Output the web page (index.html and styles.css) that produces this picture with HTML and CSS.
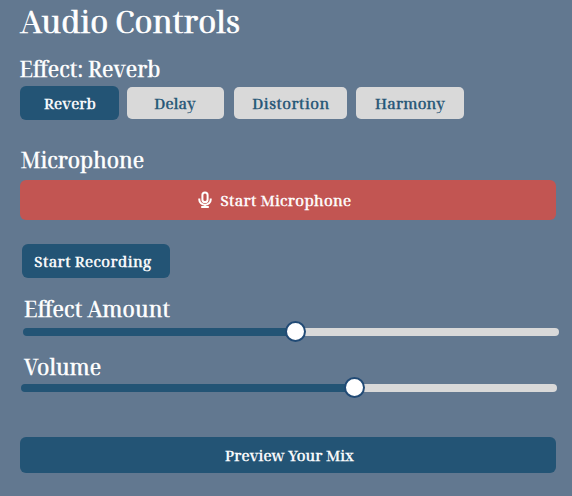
FILE: index.html
```html
<!DOCTYPE html>
<html lang="en">
<head>
<meta charset="utf-8">
<title>Audio Controls</title>
<link rel="stylesheet" href="styles.css">
</head>
<body>
<main class="panel">
  <h1 class="title">Audio Controls</h1>
  <h2 class="heading effect-heading">Effect: Reverb</h2>
  <div class="effects">
    <button class="btn effect active">Reverb</button>
    <button class="btn effect delay">Delay</button>
    <button class="btn effect distortion">Distortion</button>
    <button class="btn effect harmony">Harmony</button>
  </div>
  <h2 class="heading mic-heading">Microphone</h2>
  <button class="btn mic">
    <svg class="mic-icon" viewBox="0 0 14 18" fill="none" stroke="currentColor" stroke-width="2">
      <rect x="4.4" y="1.4" width="5.2" height="9.6" rx="2.6"/>
      <path d="M1.3 7.5v1.2a5.7 5.1 0 0 0 11.4 0V7.5M7 13.8V16M3.2 16h7.6"/>
    </svg>
    <span>Start Microphone</span>
  </button>
  <button class="btn record">Start Recording</button>
  <h2 class="heading amount-heading">Effect Amount</h2>
  <div class="slider amount"><div class="fill"></div><div class="thumb"></div><div class="rest"></div></div>
  <h2 class="heading volume-heading">Volume</h2>
  <div class="slider volume"><div class="fill"></div><div class="thumb"></div><div class="rest"></div></div>
  <button class="btn preview">Preview Your Mix</button>
</main>
</body>
</html>
```
FILE: styles.css
```css
* { box-sizing: border-box; }
body {
  margin: 0;
  height: 496px;
  overflow: hidden;
  background: #627890;
  color: #fff;
  font-family: "Noto Serif Display", "Liberation Serif", serif;
}
.panel { display: flex; flex-direction: column; align-items: flex-start; padding: 1px 16px 0 20px; }
.title, .heading { margin: 0; font-weight: 400; white-space: nowrap; }
.title { height: 40px; font-size: 31.2px; line-height: 40px; -webkit-text-stroke: 0.7px; }
.heading { height: 28px; font-size: 21.3px; line-height: 28px; -webkit-text-stroke: 0.55px; }
.effect-heading { margin: 14px 0 0 -0.5px; }
.effects { display: flex; align-items: center; height: 34px; margin-top: 3px; }
.btn {
  display: flex;
  align-items: center;
  justify-content: center;
  border: 0;
  border-radius: 6px;
  padding: 0;
  background: #235475;
  color: #fff;
  font-family: inherit;
  font-size: 15.1px;
  font-weight: 400;
  line-height: 20px;
  letter-spacing: 0.2px;
  white-space: nowrap;
  -webkit-text-stroke: 0.5px;
}
.effect { height: 32px; border-radius: 5px; background: #d9d9d9; color: #235475; }
.active { width: 99px; height: 34px; margin-right: 8px; padding-left: 1px; border-radius: 6px; background: #235475; color: #fff; letter-spacing: 0.1px; }
.delay { width: 97px; margin-right: 10px; padding-right: 1px; }
.distortion { width: 113px; margin-right: 9px; padding-left: 1px; letter-spacing: 0.5px; }
.harmony { width: 108px; }
.mic-heading { margin: 26px 0 0 0.5px; }
.mic { width: 536px; height: 40px; margin-top: 6px; padding-right: 26px; gap: 8px; background: #c25552; letter-spacing: 0.35px; }
.mic-icon { width: 14px; height: 18px; }
.record { width: 148px; height: 34px; margin: 24px 0 0 2px; padding-right: 6px; letter-spacing: 0.42px; }
.amount-heading { margin: 17px 0 0 4px; letter-spacing: 0.12px; font-feature-settings: "liga" 1; }
.slider { display: flex; align-items: center; width: 536px; height: 22px; }
.fill, .rest { height: 8px; }
.fill { background: #235475; border-radius: 4px 0 0 4px; }
.rest { flex: 1; background: #d9d9d9; border-radius: 0 4px 4px 0; }
.thumb { width: 21px; height: 21px; margin: 0 -3px; border: 2px solid #214a75; border-radius: 50%; background: #fff; z-index: 1; position: relative; top: -0.5px; }
.amount { margin: -2px 0 0 3px; }
.amount .fill { width: 265px; }
.volume-heading { margin: 10px 0 0 4px; }
.volume { margin: -4px 0 0 1px; }
.volume .fill { width: 326px; }
.preview { width: 536px; height: 36px; margin-top: 38px; padding-left: 3px; letter-spacing: 0.1px; }
```
